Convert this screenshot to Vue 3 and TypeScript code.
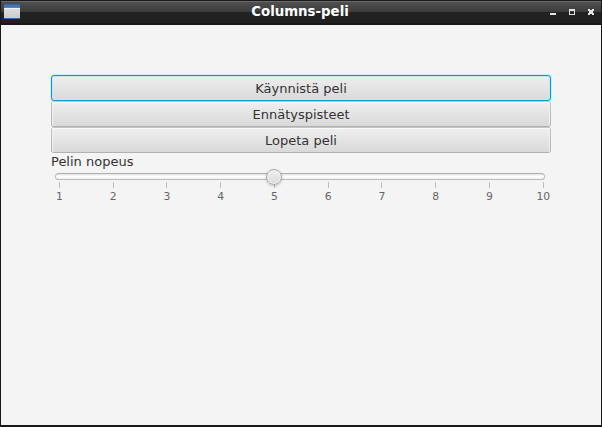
<script setup lang="ts">
import { ref } from 'vue'

const actions: string[] = ['Käynnistä peli', 'Ennätyspisteet', 'Lopeta peli']
const focused = ref(0)
const speeds: number[] = Array.from({ length: 10 }, (_, i) => i + 1)
const speed = ref(5)
</script>

<template>
  <div class="window">
    <header class="titlebar">
      <svg class="app-icon" width="18" height="18" viewBox="0 0 18 18">
        <defs>
          <linearGradient id="iconBar" x1="0" y1="0" x2="0" y2="1">
            <stop offset="0" stop-color="#3465a4" />
            <stop offset="1" stop-color="#5287cc" />
          </linearGradient>
          <linearGradient id="iconBody" x1="0" y1="0" x2="0" y2="1">
            <stop offset="0" stop-color="#dededc" />
            <stop offset="1" stop-color="#cbcbc9" />
          </linearGradient>
        </defs>
        <rect x="1" y="1" width="16" height="15" fill="#3d6cab" />
        <rect x="1" y="1" width="16" height="4" fill="url(#iconBar)" />
        <rect x="1" y="5" width="16" height="10" fill="url(#iconBody)" />
        <rect x="1" y="5" width="16" height="1" fill="#f2f4f7" />
      </svg>
      <h1 class="title">Columns-peli</h1>
      <div class="controls">
        <svg width="6" height="6" viewBox="0 0 6 6"><path d="M0 4h6v2H0z" /></svg>
        <svg width="6" height="6" viewBox="0 0 6 6"><path fill-rule="evenodd" d="M0 0h6v6H0zM1 2v3h4V2z" /></svg>
        <svg width="6" height="6" viewBox="0 0 6 6"><path d="M0 0h2v1h2V0h2v2H5v2h1v2H4V5H2v1H0V4h1V2H0z" /></svg>
      </div>
    </header>
    <main class="content">
      <button
        v-for="(label, i) in actions"
        :key="label"
        class="btn"
        :class="{ focused: focused === i }"
        @click="focused = i"
      >{{ label }}</button>
      <div class="label">Pelin nopeus</div>
      <div class="slider">
        <div class="track">
          <div class="run">
            <span class="thumb" :style="{ left: ((speed - 1) / 9) * 100 + '%' }"></span>
          </div>
        </div>
        <div class="ticks">
          <div v-for="n in speeds" :key="n" class="tick" @click="speed = n">
            <i class="mark"></i>
            <span class="num">{{ n }}</span>
          </div>
        </div>
      </div>
    </main>
  </div>
</template>

<style>
body {
  margin: 0;
  overflow: hidden;
}
</style>

<style scoped>
.window {
  box-sizing: border-box;
  display: flex;
  flex-direction: column;
  width: 602px;
  height: 427px;
  border: solid #19171a;
  border-width: 0 1px 2px;
  background: #f4f4f4;
  font-family: "DejaVu Sans", sans-serif;
  font-size: 13px;
  color: #333;
}
.titlebar {
  box-sizing: border-box;
  display: grid;
  grid-template-columns: 69px 1fr 71px;
  height: 25px;
  border-top: 1px solid #19171a;
  border-bottom: 2px solid #19171a;
  background: linear-gradient(#6a6a6a 0 1px, #505050 1px, #3b3b3b 11px, #222 11px, #202020 100%);
}
.app-icon {
  margin: 2px 0 0 2px;
}
.title {
  margin: 0;
  text-align: center;
  font-size: 13.33px;
  font-weight: bold;
  line-height: 22px;
  color: #fff;
}
.controls {
  display: flex;
  justify-content: flex-end;
  gap: 13px;
  padding: 8px 7px 0 0;
  fill: #e4e4e4;
}
.content {
  display: flex;
  flex-direction: column;
  padding: 50px;
}
.btn {
  box-sizing: border-box;
  height: 26px;
  padding: 1px 0 0;
  border: 1px solid transparent;
  border-radius: 3px;
  background:
    linear-gradient(#efefef, #d9d9d9) padding-box,
    linear-gradient(#c4c4c4, #b1b1b1) border-box;
  box-shadow: inset 0 1px #f9f9f9, inset 1px 0 #f0f0f0, inset -1px 0 #f0f0f0;
  font: inherit;
  line-height: 24px;
  color: #333;
  outline: none;
}
.btn.focused {
  border-color: #039ed3;
  box-shadow: 0 0 0 1px #cdebf5, inset 0 0 0 1px #cfe3ea;
}
.label {
  box-sizing: border-box;
  height: 16px;
  padding-top: 1px;
  line-height: 16px;
}
.slider {
  padding: 4px 4px 0;
}
.track {
  box-sizing: border-box;
  width: 490px;
  height: 7px;
  padding: 0 2px 0 4px;
  border: 1px solid #bababa;
  border-top-color: #b0b0b0;
  border-radius: 4px;
  background: linear-gradient(#e2e2e2, #fff 50%, #f1f1f1);
}
.run {
  position: relative;
  height: 5px;
}
.thumb {
  position: absolute;
  top: -5px;
  box-sizing: border-box;
  width: 16px;
  height: 16px;
  margin-left: -8px;
  border: 1px solid #a9a9a9;
  border-radius: 50%;
  background: linear-gradient(#f0f0f0, #dadada);
  box-shadow: inset 0 0 0 1px #f2f2f2, 0 1px 3px rgba(0, 0, 0, 0.2);
}
.ticks {
  display: flex;
  justify-content: space-between;
  width: 484px;
  padding: 2px 0 0 4.4px;
}
.tick {
  display: flex;
  flex-direction: column;
  align-items: center;
  width: 0;
}
.mark {
  flex: none;
  width: 1px;
  height: 6px;
  background: #bcbcbc;
}
.num {
  padding-top: 2px;
  font-size: 10.8px;
  line-height: 13px;
  color: #666;
}
</style>
